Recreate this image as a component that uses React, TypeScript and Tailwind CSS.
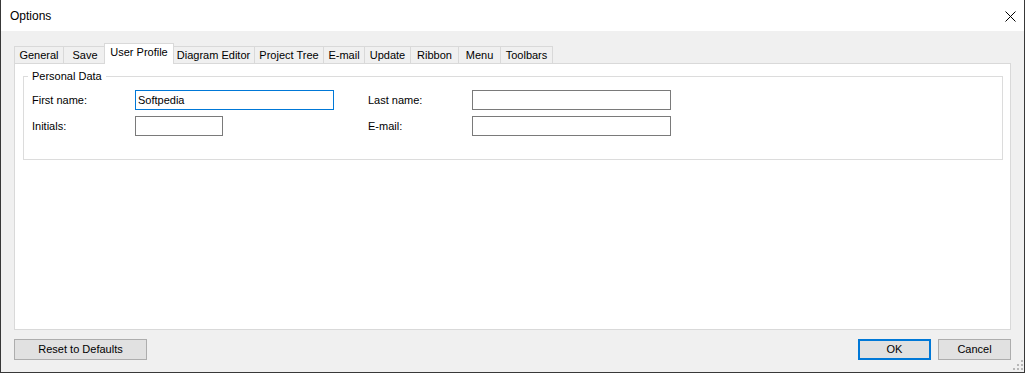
const TABS = [
  { label: 'General', w: 'w-[49px]' },
  { label: 'Save', w: 'w-[43px]' },
  { label: 'User Profile', w: 'w-[70px]', active: true },
  { label: 'Diagram Editor', w: 'w-[82px]' },
  { label: 'Project Tree', w: 'w-[69px]' },
  { label: 'E-mail', w: 'w-[41px]' },
  { label: 'Update', w: 'w-[46px]' },
  { label: 'Ribbon', w: 'w-[48px]' },
  { label: 'Menu', w: 'w-[42px]' },
  { label: 'Toolbars', w: 'w-[53px]', last: true },
]

function TextBox({ value = '', focused = false, w }: { value?: string; focused?: boolean; w: string }) {
  return (
    <div
      className={`h-[20px] ${w} bg-white border flex items-center pl-[2px] text-[11px] leading-[13px] text-black ${
        focused ? 'border-[#0078d7]' : 'border-[#7a7a7a]'
      }`}
    >
      {value}
    </div>
  )
}

export default function App() {
  return (
    <div className="relative w-[1025px] h-[373px] bg-[#f0f0f0] border-x border-b border-[#383838] flex flex-col font-['Liberation_Sans',Arial,sans-serif] text-black select-none">
      {/* Title bar */}
      <div className="h-[31px] bg-white flex items-center justify-between pl-[9px] pr-[8px]">
        <span className="text-[12px] leading-[14px]">Options</span>
        <svg width="11" height="11" viewBox="0 0 11 11" className="mt-[1px]">
          <path d="M0.5 0.5 L10.5 10.5 M10.5 0.5 L0.5 10.5" stroke="#000" strokeWidth="1" />
        </svg>
      </div>

      {/* Body */}
      <div className="flex-1 flex flex-col pt-[12px] px-[13px]">
        {/* Tabs */}
        <div className="flex items-end h-[20px]">
          {TABS.map(t => (
            <div
              key={t.label}
              className={`shrink-0 flex justify-center text-[11px] leading-[13px] border-[#d9d9d9] ${t.w} ${
                t.active
                  ? 'relative z-10 h-[21px] -mb-px -mx-[2px] bg-white border-x border-t items-start pt-[2px]'
                  : `h-[17px] bg-[#f0f0f0] border-l border-t items-center ${t.last ? 'border-r' : ''}`
              }`}
            >
              {t.label}
            </div>
          ))}
        </div>

        {/* Tab page */}
        <div className="h-[267px] bg-white border border-[#d9d9d9]">
          <fieldset className="ml-[8px] mt-[6px] w-[980px] border border-[#dcdcdc] px-[8px] pt-[7px] pb-[23px]">
            <legend className="ml-[-4px] px-[4px] text-[11px] leading-[13px]">Personal Data</legend>
            <div className="flex flex-col gap-[6px] text-[11px] leading-[13px]">
              <div className="flex items-center">
                <span className="w-[103px]">First name:</span>
                <TextBox value="Softpedia" focused w="w-[199px]" />
                <span className="ml-[34px] w-[104px]">Last name:</span>
                <TextBox w="w-[199px]" />
              </div>
              <div className="flex items-center">
                <span className="w-[103px]">Initials:</span>
                <TextBox w="w-[88px]" />
                <span className="ml-[145px] w-[104px]">E-mail:</span>
                <TextBox w="w-[199px]" />
              </div>
            </div>
          </fieldset>
        </div>

        {/* Buttons */}
        <div className="flex items-center mt-[9px] text-[11px] leading-[13px]">
          <button className="w-[133px] h-[21px] bg-[#e1e1e1] border border-[#adadad]">Reset to Defaults</button>
          <div className="flex-1" />
          <button className="w-[73px] h-[21px] bg-[#e1e1e1] border-2 border-[#0078d7]">OK</button>
          <button className="ml-[7px] w-[73px] h-[21px] bg-[#e1e1e1] border border-[#adadad]">Cancel</button>
        </div>
      </div>

      {/* Resize grip */}
      <svg width="10" height="10" viewBox="0 0 10 10" className="absolute right-[1px] bottom-[2px]">
        <rect x="8" y="0" width="2" height="2" fill="#b8b8b8" />
        <rect x="4" y="4" width="2" height="2" fill="#b8b8b8" />
        <rect x="8" y="4" width="2" height="2" fill="#b8b8b8" />
        <rect x="0" y="8" width="2" height="2" fill="#b8b8b8" />
        <rect x="4" y="8" width="2" height="2" fill="#b8b8b8" />
        <rect x="8" y="8" width="2" height="2" fill="#b8b8b8" />
      </svg>
    </div>
  )
}
